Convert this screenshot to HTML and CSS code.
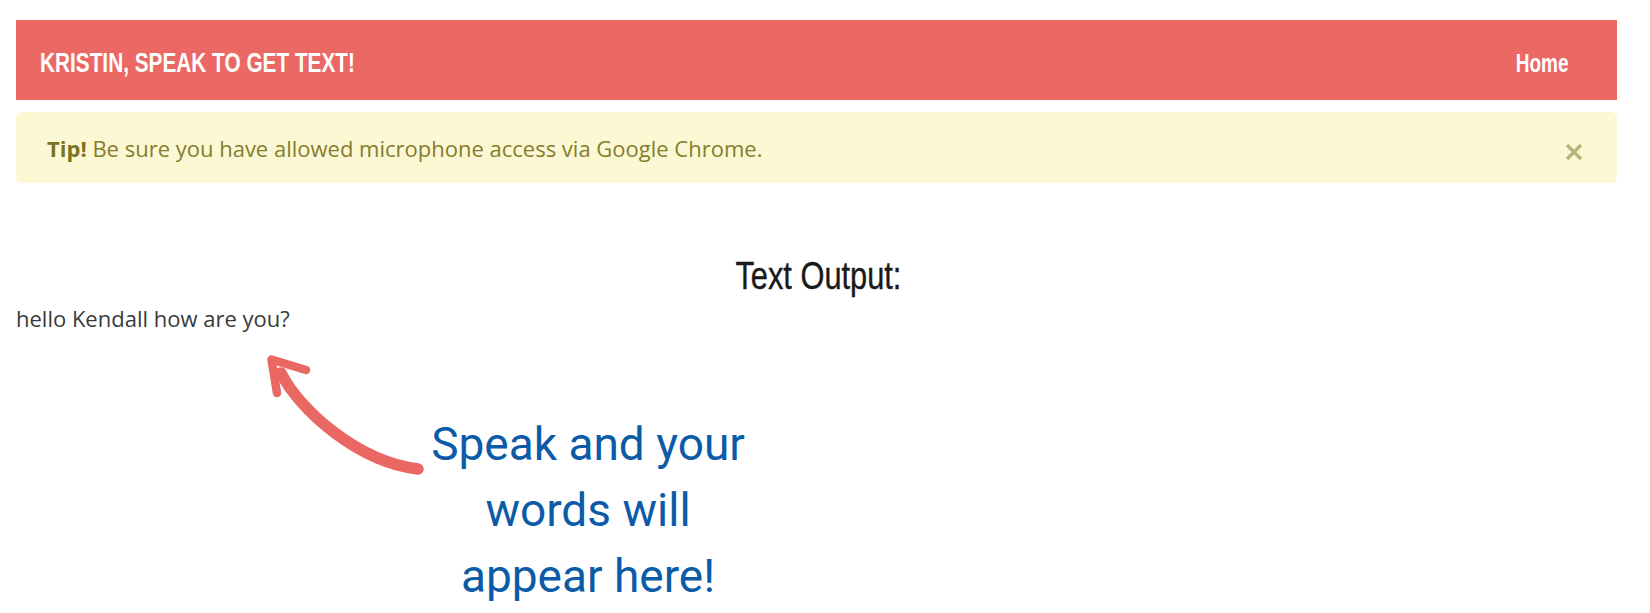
FILE: index.html
```html
<!DOCTYPE html>
<html lang="en">
<head>
<meta charset="utf-8">
<title>Speech to Text</title>
<link rel="stylesheet" href="styles.css">
</head>
<body>
<div class="page">
  <nav class="navbar">
    <span class="brand"><span class="brand-text">KRISTIN, SPEAK TO GET TEXT!</span></span>
    <a class="nav-link" href="#"><span class="nav-text">Home</span></a>
  </nav>
  <div class="alert">
    <p class="alert-text"><strong>Tip!</strong> Be sure you have allowed microphone access via Google Chrome.</p>
    <span class="close" aria-label="close">
      <svg width="18" height="18" viewBox="0 0 18 18"><path d="M2 2 L16 16 M16 2 L2 16" stroke="currentColor" stroke-width="3.4" stroke-linecap="butt"/></svg>
    </span>
  </div>
  <h3 class="heading"><span class="heading-text">Text Output:</span></h3>
  <p class="output">hello Kendall how are you?</p>
</div>

<svg class="arrow" width="1650" height="613" viewBox="0 0 1650 613">
  <path d="M418 469 C359 462 300 411 281 373" fill="none" stroke="#e96864" stroke-width="11.5" stroke-linecap="round"/>
  <path d="M277 393 L271.5 359.5 L306 370" fill="none" stroke="#e96864" stroke-width="8.5" stroke-linecap="round" stroke-linejoin="round"/>
</svg>
<div class="callout">Speak and your<br>words will<br>appear here!</div>
</body>
</html>
```

FILE: styles.css
```css
* { box-sizing: border-box; }

html, body {
  margin: 0;
  padding: 0;
  background: #ffffff;
  overflow: hidden;
}

body {
  width: 1650px;
  height: 613px;
  position: relative;
  font-family: "Open Sans", "Noto Sans", sans-serif;
  color: #333333;
}

.page {
  padding: 20px 33px 0 16px;
}

.navbar {
  height: 80px;
  background: #eb6864;
  display: flex;
  align-items: center;
  justify-content: space-between;
  padding: 6px 49px 0 24px;
}

.brand,
.nav-link {
  font-family: "Liberation Sans", Arial, sans-serif;
  font-weight: bold;
  color: #ffffff;
  text-decoration: none;
  line-height: 1;
}

.brand { font-size: 27px; }
.nav-link { font-size: 25px; }

.brand-text {
  display: inline-block;
  transform: scaleX(0.77);
  transform-origin: left center;
  white-space: nowrap;
}

.nav-text {
  display: inline-block;
  transform: scaleX(0.76);
  transform-origin: right center;
}

.alert {
  margin-top: 12px;
  height: 71px;
  background: #fcf8d4;
  border-radius: 6px;
  display: flex;
  align-items: center;
  justify-content: space-between;
  padding: 0 34px 0 31px;
  color: #857d2c;
}

.alert-text {
  margin: 0;
  font-size: 22px;
}

.alert-text strong {
  color: #7a741f;
  font-weight: bold;
}

.close {
  display: flex;
  margin-top: 8px;
  color: #b8b47c;
}

.heading {
  margin: 73px 0 0;
  padding-left: 4px;
  text-align: center;
  font-family: "Liberation Sans", Arial, sans-serif;
  font-weight: normal;
  font-size: 38px;
  line-height: 40px;
  color: #1a1a1a;
}

.heading-text {
  display: inline-block;
  transform: scaleX(0.81);
  -webkit-text-stroke: 0.4px #1a1a1a;
}

.output {
  margin: 8px 0 0;
  font-size: 22px;
  line-height: 28px;
  color: #3a3a3a;
}

.arrow {
  position: absolute;
  left: 0;
  top: 0;
  pointer-events: none;
}

.callout {
  position: absolute;
  left: 408px;
  top: 411px;
  width: 360px;
  text-align: center;
  font-family: Roboto, "Liberation Sans", sans-serif;
  font-size: 46px;
  line-height: 66px;
  color: #0b5ba7;
}
```
